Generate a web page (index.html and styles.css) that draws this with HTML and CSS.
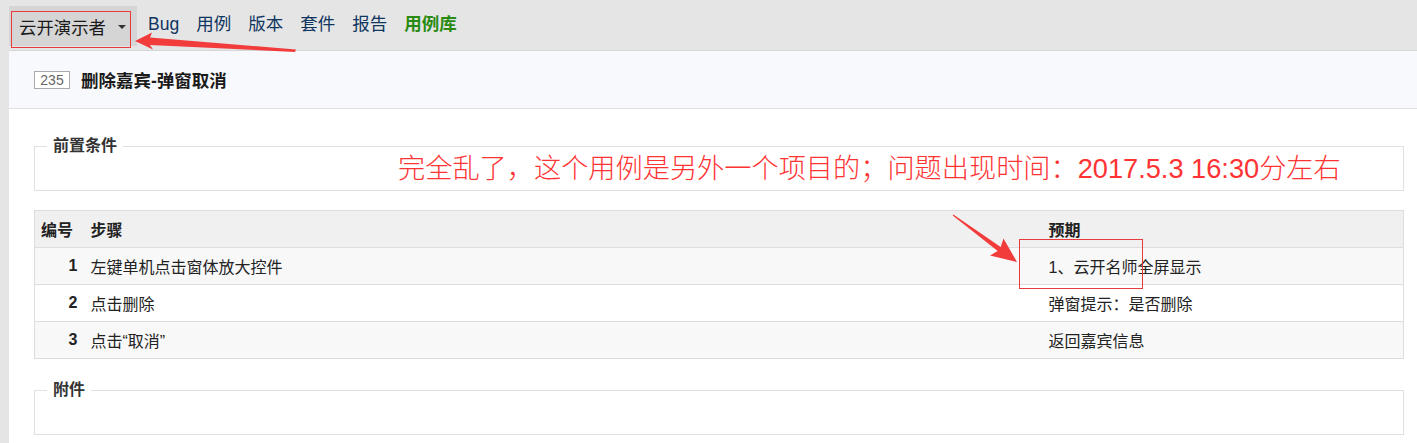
FILE: index.html
```html
<!DOCTYPE html>
<html lang="zh-CN">
<head>
<meta charset="utf-8">
<title>用例库</title>
<link rel="stylesheet" href="styles.css">
</head>
<body>
<div class="nav">
  <div class="dropdown"><span>云开演示者</span><span class="caret"></span></div>
  <a class="nav-link">Bug</a>
  <a class="nav-link">用例</a>
  <a class="nav-link">版本</a>
  <a class="nav-link">套件</a>
  <a class="nav-link">报告</a>
  <a class="nav-link active">用例库</a>
</div>
<div class="panel">
  <div class="panel-head">
    <span class="badge">235</span>
    <span class="title">删除嘉宾-弹窗取消</span>
  </div>
  <div class="panel-body">
    <fieldset class="fs">
      <legend>前置条件</legend>
      <div class="fs-body"></div>
    </fieldset>
    <table class="steps">
      <colgroup><col class="c-id"><col><col class="c-exp"></colgroup>
      <thead>
        <tr><th class="th-id">编号</th><th>步骤</th><th>预期</th></tr>
      </thead>
      <tbody>
        <tr class="odd"><td class="id">1</td><td>左键单机点击窗体放大控件</td><td>1、云开名师全屏显示</td></tr>
        <tr><td class="id">2</td><td>点击删除</td><td>弹窗提示：是否删除</td></tr>
        <tr class="odd"><td class="id">3</td><td>点击“取消”</td><td>返回嘉宾信息</td></tr>
      </tbody>
    </table>
    <fieldset class="fs fs-files">
      <legend>附件</legend>
      <div class="fs-body"></div>
    </fieldset>
  </div>
</div>

<div class="note">完全乱了，这个用例是另外一个项目的；问题出现时间：<span class="num">2017.5.3 16:30</span>分左右</div>
<div class="mark mark-menu"></div>
<div class="mark mark-exp"></div>
<svg class="arrows" width="1417" height="443" viewBox="0 0 1417 443">
  <polygon points="135,41 152,32.5 150,37.5 296,49.5 295,52 150,45 153,49.5" />
  <polygon points="1017,262 1003.5,238.5 1000.7,247 953.3,214.6 952.7,215.6 997.7,251 990,255.5" />
</svg>
</body>
</html>
```
FILE: styles.css
```css
* { box-sizing: border-box; }

html, body {
  margin: 0;
  padding: 0;
}

body {
  background: #e5e5e5;
  font-family: "Liberation Sans", "Noto Sans CJK SC", sans-serif;
  font-size: 16px;
  color: #333;
  width: 1417px;
  height: 443px;
  overflow: hidden;
  position: relative;
}

/* ---------- top navigation ---------- */
.nav {
  height: 50px;
  display: flex;
  align-items: flex-start;
  padding: 6px 0 0 9px;
}

.dropdown {
  height: 40px;
  width: 128px;
  background: #d5d5d5;
  display: flex;
  align-items: center;
  padding-left: 10px;
  font-size: 17.4px;
  color: #1a1a1a;
  margin-right: 11px;
}

.caret {
  display: inline-block;
  width: 0;
  height: 0;
  border-left: 4px solid transparent;
  border-right: 4px solid transparent;
  border-top: 4px solid #333;
  margin-left: 12px;
  margin-top: 1px;
}

.nav-link {
  font-size: 17.5px;
  line-height: 36px;
  color: #0f3561;
  margin-right: 17px;
  text-decoration: none;
}

.nav-link.active {
  color: #2a8b12;
  font-weight: bold;
}

/* ---------- panel ---------- */
.panel {
  margin-left: 9px;
  background: #fff;
  border-top: 1px solid #d6d6d6;
  height: 393px;
}

.panel-head {
  height: 58px;
  background: #f8f9fc;
  border-bottom: 1px solid #e0e0e0;
  display: flex;
  align-items: center;
  padding-left: 25px;
}

.badge {
  display: inline-block;
  width: 36px;
  height: 18px;
  border: 1px solid #aaa;
  background: #fff;
  color: #666;
  font-size: 14px;
  line-height: 16px;
  text-align: center;
  margin-right: 11px;
}

.title {
  font-size: 17.5px;
  font-weight: bold;
  color: #1a1a1a;
}

.panel-body {
  padding: 27px 13px 0 25px;
}

/* ---------- fieldsets ---------- */
.fs {
  margin: 0 0 19px 0;
  padding: 0 12px;
  border: 1px solid #e0e0e0;
  min-width: 0;
}

.fs legend {
  padding: 0 6px;
  font-size: 16px;
  font-weight: bold;
  line-height: 20px;
  color: #333;
}

.fs-body {
  height: 34px;
}

.fs-files {
  margin-top: 21px;
}

/* ---------- steps table ---------- */
.steps {
  width: 100%;
  border-collapse: collapse;
  table-layout: fixed;
  border: 1px solid #ddd;
  font-size: 16px;
}

.c-id { width: 50px; }
.c-exp { width: 361px; }

.steps th,
.steps td {
  height: 37px;
  padding: 0 6px;
  text-align: left;
  border-top: 1px solid #ddd;
  color: #222;
  white-space: nowrap;
}

.steps th {
  background: #f0f0f0;
  font-weight: bold;
}

.steps tbody tr { background: #fff; }
.steps tbody tr.odd { background: #f8f8f8; }

.steps td.id {
  text-align: right;
  font-weight: bold;
  padding-right: 7px;
}

/* ---------- annotations (overlays) ---------- */
.note {
  position: absolute;
  left: 398px;
  top: 151px;
  font-size: 27.2px;
  line-height: 30px;
  color: #f33;
  white-space: nowrap;
  font-family: "Noto Sans CJK SC", sans-serif;
  font-weight: 300;
}

.note .num {
  font-family: "Liberation Sans", sans-serif;
  font-weight: normal;
}

.mark {
  position: absolute;
  border: 1px solid #e8393b;
}

.mark-menu {
  left: 11px;
  top: 11px;
  width: 120px;
  height: 37px;
}

.mark-exp {
  left: 1019px;
  top: 239px;
  width: 124px;
  height: 50px;
}

.arrows {
  position: absolute;
  left: 0;
  top: 0;
  pointer-events: none;
}

.arrows polygon {
  fill: #f23b3b;
}
```
